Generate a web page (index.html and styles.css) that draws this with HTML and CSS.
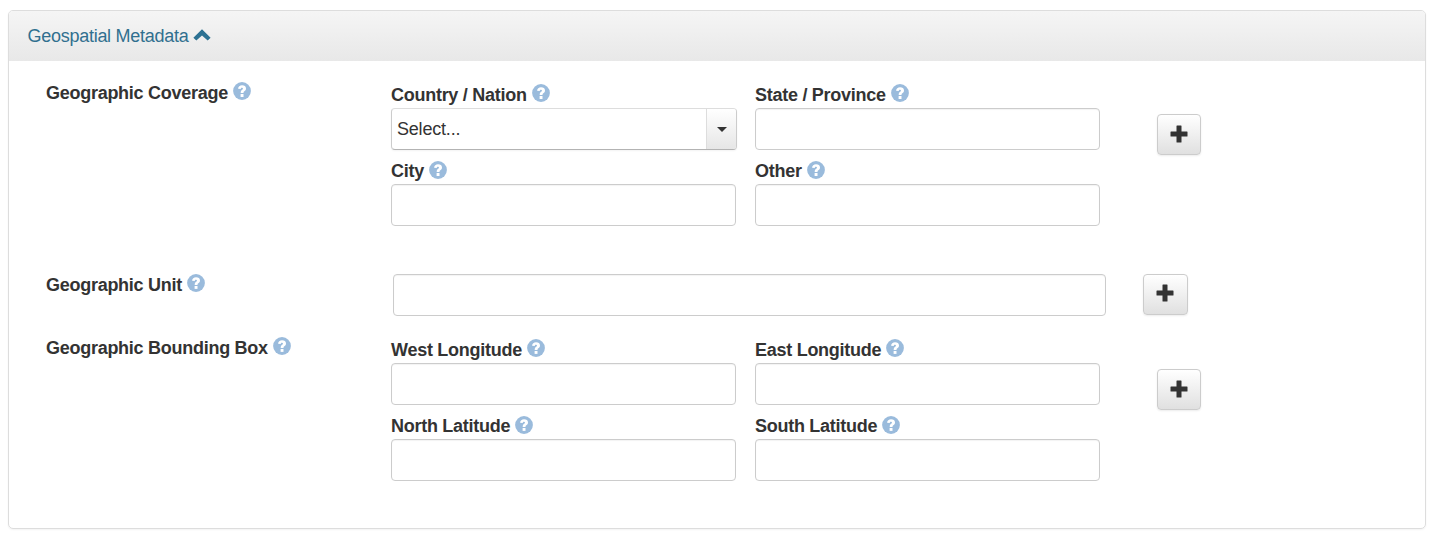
FILE: index.html
```html
<!DOCTYPE html>
<html lang="en">
<head>
<meta charset="utf-8">
<title>Geospatial Metadata</title>
<link rel="stylesheet" href="styles.css">
</head>
<body>
<svg class="sprite" aria-hidden="true">
  <symbol id="help" viewBox="0 0 18 18">
    <circle cx="9" cy="9" r="8.9" fill="#9abbdc"/>
    <path d="M5.100 6.800C5.200 4.500 6.800 3.300 9.100 3.300c2.300 0 3.900 1.200 3.900 3.200 0 1.400-.8 2.100-1.600 2.700-.7.5-.9.8-.9 1.700H7.700c0-1.700.5-2.500 1.400-3.100.6-.4.9-.7.9-1.200 0-.6-.4-.9-1-.9-.8 0-1.200.4-1.300 1.200z" fill="#fff"/>
    <path d="M7.600 12h2.900v2.900H7.600z" fill="#fff"/>
  </symbol>
  <symbol id="plus" viewBox="0 0 18 18">
    <path d="M7 .5h4q.5 0 .5.5v5.500H17q.5 0 .5.5v4q0 .5-.5.5h-5.500V17q0 .5-.5.5H7q-.5 0-.5-.5v-5.500H1q-.5 0-.5-.5V7q0-.5.5-.5h5.500V1q0-.5.5-.5z" fill="#333"/>
  </symbol>
</svg>
<section class="panel">
  <header class="panel-heading">
    <span>Geospatial Metadata</span>
    <svg class="chevron" viewBox="0 0 18 12"><path d="M9 .2 17.600 8.800 14.700 11.600 9 6.600 3.300 11.600.4 8.800z" fill="#2d7293"/></svg>
  </header>
  <div class="panel-body">
    <div class="row row-coverage">
      <div class="label">Geographic Coverage<svg class="help"><use href="#help"/></svg></div>
      <div class="fields">
        <div class="field">
          <div class="label">Country / Nation<svg class="help"><use href="#help"/></svg></div>
          <div class="select"><span class="select-value">Select...</span><span class="select-trigger"><span class="caret"></span></span></div>
        </div>
        <div class="field">
          <div class="label">State / Province<svg class="help"><use href="#help"/></svg></div>
          <input class="input" type="text">
        </div>
        <div class="field field-lower">
          <div class="label">City<svg class="help"><use href="#help"/></svg></div>
          <input class="input" type="text">
        </div>
        <div class="field field-lower">
          <div class="label">Other<svg class="help"><use href="#help"/></svg></div>
          <input class="input" type="text">
        </div>
      </div>
      <button class="add"><svg class="plus"><use href="#plus"/></svg></button>
    </div>
    <div class="row row-unit">
      <div class="label">Geographic Unit<svg class="help"><use href="#help"/></svg></div>
      <input class="input" type="text">
      <button class="add add-single"><svg class="plus"><use href="#plus"/></svg></button>
    </div>
    <div class="row">
      <div class="label">Geographic Bounding Box<svg class="help"><use href="#help"/></svg></div>
      <div class="fields">
        <div class="field">
          <div class="label">West Longitude<svg class="help"><use href="#help"/></svg></div>
          <input class="input" type="text">
        </div>
        <div class="field">
          <div class="label">East Longitude<svg class="help"><use href="#help"/></svg></div>
          <input class="input" type="text">
        </div>
        <div class="field field-lower">
          <div class="label">North Latitude<svg class="help"><use href="#help"/></svg></div>
          <input class="input" type="text">
        </div>
        <div class="field field-lower">
          <div class="label">South Latitude<svg class="help"><use href="#help"/></svg></div>
          <input class="input" type="text">
        </div>
      </div>
      <button class="add"><svg class="plus"><use href="#plus"/></svg></button>
    </div>
  </div>
</section>
</body>
</html>
```
FILE: styles.css
```css
* { box-sizing: border-box; }
body {
  margin: 0;
  padding: 10px 10px 7px 8px;
  background: #fff;
  color: #333;
  font: 18px/22px "Liberation Sans", Arial, sans-serif;
  letter-spacing: -.27px;
}
.sprite { display: none; }
.panel {
  height: 519px;
  border: 1px solid #ddd;
  border-radius: 5px;
  box-shadow: 0 1px 2px rgba(0, 0, 0, .05);
  overflow: hidden;
}
.panel-heading {
  display: flex;
  align-items: center;
  gap: 4.500px;
  height: 50px;
  padding-left: 18.5px;
  background: linear-gradient(#f5f5f5, #e8e8e8);
  color: #31708f;
}
.chevron { width: 18px; height: 12px; margin-bottom: 2px; }
.panel-body { padding: 21px 0 0 37px; }
.row {
  display: grid;
  grid-template-columns: 345px 709px auto;
  justify-content: start;
  align-items: start;
}
.row-coverage { height: 192px; }
.row-unit { grid-template-columns: 347px 713px auto; height: 63px; }
.label {
  display: flex;
  align-items: flex-start;
  gap: 5px;
  height: 22px;
  font-weight: bold;
  white-space: nowrap;
}
.help { width: 18px; height: 18px; flex: none; }
.field-lower .help { margin-top: 1px; }
.fields {
  display: grid;
  grid-template-columns: 345px 345px;
  gap: 10px 19px;
  padding-top: 2px;
}
.field { display: flex; flex-direction: column; gap: 2px; }
.input {
  display: block;
  width: 100%;
  height: 42px;
  padding: 6px 12px;
  border: 1px solid #ccc;
  border-radius: 4px;
  background: #fff;
  box-shadow: inset 0 1px 1px rgba(0, 0, 0, .05);
  font: inherit;
}
.select {
  display: flex;
  width: 346px;
  height: 42px;
  border: 1px solid #ccc;
  border-color: #ddd #ccc #b3b3b3;
  border-radius: 4px;
  box-shadow: 0 1px 2px rgba(0, 0, 0, .05);
  overflow: hidden;
}
.select-value { flex: 1; padding: 9px 0 0 5px; letter-spacing: -.2px; }
.select-trigger {
  display: flex;
  align-items: center;
  justify-content: center;
  width: 30px;
  border-left: 1px solid #ddd;
  background: linear-gradient(#fff, #e6e6e6);
}
.caret {
  border: 5px solid transparent;
  border-top-color: #333;
  border-bottom: 0;
}
.add {
  display: flex;
  align-items: center;
  justify-content: center;
  width: 44px;
  height: 41px;
  margin: 32px 0 0 57px;
  padding: 0 1px 2px 0;
  border: 1px solid #ccc;
  border-radius: 4px;
  background: linear-gradient(#fff, #e0e0e0);
  box-shadow: 0 1px 2px rgba(0, 0, 0, .08);
}
.add-single { width: 45px; margin: 0 0 0 37px; padding-bottom: 4px; }
.plus { width: 18px; height: 18px; }
```
